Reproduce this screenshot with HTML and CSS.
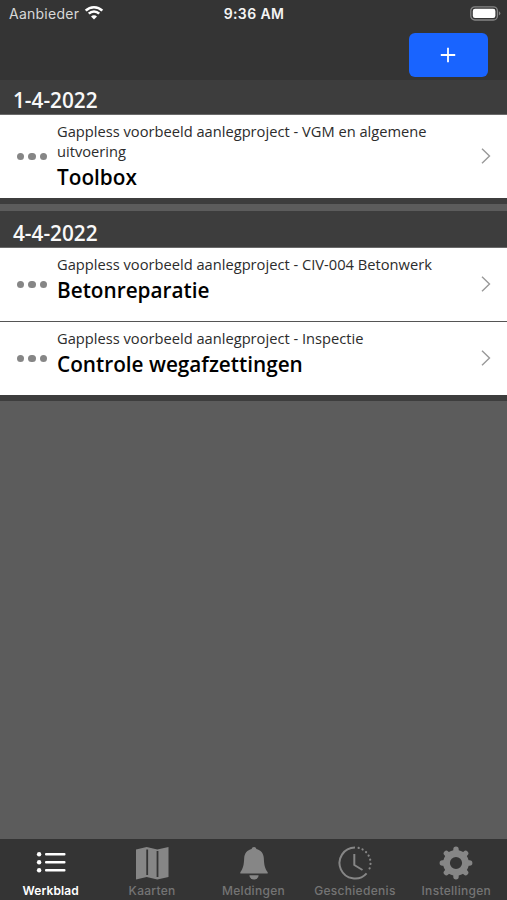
FILE: index.html
```html
<!DOCTYPE html>
<html lang="nl">
<head>
    <meta charset="UTF-8">
    <meta name="viewport" content="width=device-width, initial-scale=1.0">
    <title>Werkblad</title>
    <link rel="stylesheet" href="styles.css">
</head>
<body>
    <div class="statusbar">
        <div class="carrier">
            <span>Aanbieder</span>
            <svg width="20" height="15" viewBox="0 0 20 15" fill="none" stroke="#fff" stroke-width="2.6">
                <path d="M1.7 5.6a11.8 11.8 0 0 1 16.6 0"/>
                <path d="M4.8 8.7a7.4 7.4 0 0 1 10.4 0"/>
                <path d="M10 14.4l-3-3a4.2 4.2 0 0 1 6 0z" fill="#fff" stroke="none"/>
            </svg>
        </div>
        <div class="time">9:36 AM</div>
        <svg class="battery" width="31" height="15" viewBox="0 0 31 15">
            <rect x="0.8" y="0.8" width="26.6" height="13.2" rx="4" fill="none" stroke="#858585" stroke-width="1.3"/>
            <rect x="2.8" y="2.8" width="22.6" height="9.2" rx="2.2" fill="#fff"/>
            <path d="M28.9 5.2q3 2.2 0 4.4z" fill="#858585"/>
        </svg>
    </div>
    <header class="toolbar">
        <button class="add" aria-label="Toevoegen">
            <svg width="16" height="16" viewBox="0 0 16 16" stroke="#fff" stroke-width="1.8">
                <path d="M8 0.8v14.4M0.8 8h14.4"/>
            </svg>
        </button>
    </header>

    <main class="list">
        <section class="day">
            <h2>1-4-2022</h2>
            <div class="item tall">
                <div class="dots"><i></i><i></i><i></i></div>
                <div class="text">
                    <p>Gappless voorbeeld aanlegproject - VGM en algemene uitvoering</p>
                    <h3>Toolbox</h3>
                </div>
                <svg class="chevron" width="10" height="16" viewBox="0 0 10 16"><path d="M1 0.8L8.5 8L1 15.2"/></svg>
            </div>
        </section>
        <section class="day">
            <h2>4-4-2022</h2>
            <div class="item">
                <div class="dots"><i></i><i></i><i></i></div>
                <div class="text">
                    <p>Gappless voorbeeld aanlegproject - CIV-004 Betonwerk</p>
                    <h3>Betonreparatie</h3>
                </div>
                <svg class="chevron" width="10" height="16" viewBox="0 0 10 16"><path d="M1 0.8L8.5 8L1 15.2"/></svg>
            </div>
            <div class="item">
                <div class="dots"><i></i><i></i><i></i></div>
                <div class="text">
                    <p>Gappless voorbeeld aanlegproject - Inspectie</p>
                    <h3>Controle wegafzettingen</h3>
                </div>
                <svg class="chevron" width="10" height="16" viewBox="0 0 10 16"><path d="M1 0.8L8.5 8L1 15.2"/></svg>
            </div>
        </section>
    </main>

    <nav class="tabs">
        <a class="tab active">
            <svg width="34" height="34" viewBox="0 0 34 34" fill="currentColor">
                <circle cx="5.1" cy="8.2" r="2.2"/><circle cx="5.1" cy="16.2" r="2.2"/><circle cx="5.1" cy="24.2" r="2.2"/>
                <rect x="11" y="7" width="20.5" height="2.4" rx="1"/>
                <rect x="11" y="15" width="20.5" height="2.4" rx="1"/>
                <rect x="11" y="23" width="20.5" height="2.4" rx="1"/>
            </svg>
            <span>Werkblad</span>
        </a>
        <a class="tab">
            <svg width="34" height="34" viewBox="0 0 34 34">
                <path d="M1 3.5l10.7-2.5 10.6 2.5L33.5 1v30l-11.2 2.5-10.6-2.5L1 33.5z" fill="currentColor"/>
                <path d="M12.2 3.5V29M22.5 5v26" stroke="#343434" stroke-width="1.8"/>
            </svg>
            <span>Kaarten</span>
        </a>
        <a class="tab">
            <svg width="34" height="34" viewBox="0 0 34 34" fill="currentColor">
                <path d="M17 1c1.3 0 2.1.8 2.4 2 4.3 1 7.1 4.3 7.4 9 .3 6 .8 10.4 3.9 14.2v1.3H3.300v-1.300C6.400 22.400 6.900 18 7.200 12c.3-4.700 3.100-8 7.400-9 .3-1.200 1.100-2 2.400-2z"/>
                <path d="M12.4 29.3h9.2a4.600 4.300 0 0 1-9.200 0z"/>
            </svg>
            <span>Meldingen</span>
        </a>
        <a class="tab">
            <svg width="34" height="34" viewBox="0 0 34 34" fill="none" stroke="currentColor" stroke-width="2">
                <path d="M17 1.5a15.5 15.5 0 1 0 11.600 25.800"/>
                <path d="M16.3 8v11l8.2 5" stroke-linejoin="round"/>
                <path d="M20.6 1.9a15.5 15.5 0 0 1 9.400 23.600" stroke-width="2.2" stroke-linecap="round" stroke-dasharray="0.1 4.2"/>
            </svg>
            <span>Geschiedenis</span>
        </a>
        <a class="tab">
            <svg width="34" height="34" viewBox="0 0 34 34" fill="none" stroke="currentColor">
                <circle cx="17" cy="17" r="9.5" stroke-width="6.8"/>
                <path d="M17 3.3v3M17 27.7v3M3.300 17h3M27.700 17h3M7.350 7.350l2.100 2.100M24.550 24.550l2.100 2.100M7.350 26.650l2.100-2.100M24.550 9.450l2.100-2.100" stroke-width="5.4" stroke-linecap="round"/>
            </svg>
            <span>Instellingen</span>
        </a>
    </nav>
</body>
</html>
```
FILE: styles.css
```css
* {
    box-sizing: border-box;
}

body {
    display: flex;
    flex-direction: column;
    height: 100vh;
    margin: 0;
    overflow: hidden;
    background-color: #5c5c5c;
    font-family: 'Open Sans', sans-serif;
}

h2, h3, p {
    margin: 0;
}

svg {
    display: block;
    flex-shrink: 0;
}

.statusbar {
    display: grid;
    grid-template-columns: 1fr auto 1fr;
    align-items: center;
    height: 28px;
    padding: 0 6px 1px 9px;
    background-color: #343434;
    color: #f4f4f4;
    font-family: Inter, sans-serif;
    font-size: 14px;
}

.carrier {
    display: flex;
    align-items: center;
    gap: 5px;
    color: #d8d8d8;
    letter-spacing: 0.25px;
}

.carrier svg {
    margin-top: -2px;
}

.time {
    padding-right: 2px;
    font-weight: 600;
    letter-spacing: 0.4px;
}

.battery {
    justify-self: end;
    margin-top: -1px;
}

.toolbar {
    display: flex;
    justify-content: flex-end;
    height: 52px;
    padding: 5px 19.5px 0 0;
    background-color: #343434;
}

.add {
    display: flex;
    align-items: center;
    justify-content: center;
    width: 78.5px;
    height: 44px;
    padding: 0;
    border: none;
    border-radius: 6px;
    background-color: #1964ff;
}

.list {
    flex: 1;
}

.day {
    margin-bottom: 7px;
    padding-bottom: 6px;
    background-color: #3d3d3d;
}

.day h2 {
    height: 35px;
    padding-left: 13px;
    border-bottom: 1px solid #6a6a6a;
    color: #f8f8f8;
    font-size: 20.75px;
    font-weight: 600;
    line-height: 40px;
}

.day + .day h2 {
    height: 37px;
    line-height: 44px;
}

.item {
    display: flex;
    align-items: center;
    height: 73px;
    padding: 0 16px;
    background-color: #fff;
}

.item.tall {
    height: 83px;
}

.item + .item {
    height: 74px;
    border-top: 1px solid #555;
}

.dots {
    display: flex;
    gap: 4px;
    width: 41px;
    padding-left: 0.5px;
}

.dots i {
    width: 7.5px;
    height: 7.5px;
    border-radius: 50%;
    background-color: #868686;
}

.text {
    flex: 1;
    align-self: flex-start;
    padding: 6px 40px 0 0;
}

.text p {
    color: #2c2c2c;
    font-size: 14.68px;
    line-height: 20px;
}

.text h3 {
    color: #000;
    font-size: 20.75px;
    font-weight: 600;
    line-height: 33px;
}

.chevron {
    margin-top: -2px;
    fill: none;
    stroke: #999;
    stroke-width: 1.4;
}

.tabs {
    display: flex;
    height: 61px;
    background-color: #343434;
    font-family: Inter, sans-serif;
}

.tab {
    display: flex;
    flex: 1;
    flex-direction: column;
    align-items: center;
    padding-top: 7px;
    color: #868686;
}

.tab span {
    margin-top: 3px;
    color: #747474;
    font-size: 12px;
    font-weight: 500;
    letter-spacing: 0.3px;
    line-height: 15px;
}

.tab.active,
.tab.active span {
    color: #fff;
}

.tab.active span {
    font-weight: 600;
    letter-spacing: 0.1px;
}
```
